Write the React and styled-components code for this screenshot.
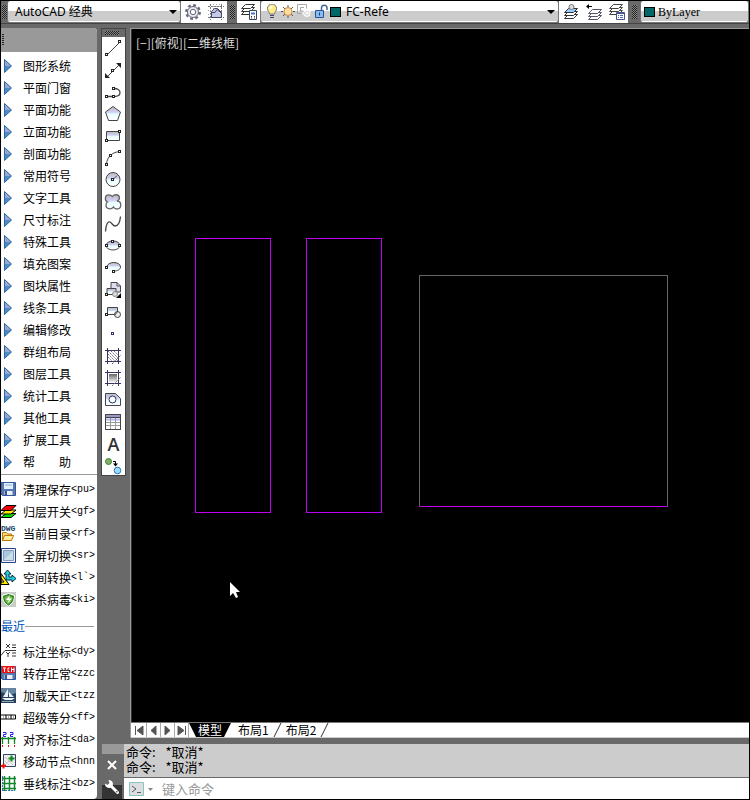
import React from "react";
import styled, { createGlobalStyle } from "styled-components";

const GlobalStyle = createGlobalStyle`
  * { box-sizing: border-box; }
  body { margin: 0; background: #000; }
  button, input, select { font: inherit; color: inherit; margin: 0; }
`;

const cjk = `"Noto Sans CJK SC", sans-serif`;

const Frame = styled.div`
  display: flex;
  flex-direction: column;
  min-height: 100vh;
  padding: 1px;
  background: #000;
  color: #000;
  font: 12px/22px ${cjk};
`;

/* ---------- top bar ---------- */

const TopBar = styled.header`
  display: flex;
  height: 23px;
  flex: none;
  background: #696969;
  border-bottom: 1px solid #444;
`;

const Grip = styled.span`
  flex: none;
  width: ${(p) => p.$w}px;
  display: flex;
  align-items: center;
  justify-content: center;
  &::before {
    content: "";
    width: 5px;
    height: 14px;
    background: repeating-conic-gradient(#222 0 25%, #888 0 50%) 0 0 / 2px 2px;
  }
`;

const Combo = styled.div`
  position: relative;
  display: flex;
  align-items: center;
  height: 22px;
  flex: ${(p) => p.$flex || "none"};
  width: ${(p) => (p.$w ? p.$w + "px" : "auto")};
  min-width: 0;
  overflow: hidden;
  border: 1px solid #777;
  border-width: 0 1px 1px 1px;
  border-radius: 3px;
  background: linear-gradient(#fff 0 10px, #ccc 10px 20px, #fff 20px);
`;

const ComboSelect = styled.select`
  appearance: none;
  width: 100%;
  height: 21px;
  border: 0;
  outline: 0;
  background: transparent;
  padding: 0 16px 0 ${(p) => p.$pad}px;
  font: 12px/20px ${(p) => (p.$serif ? `"Liberation Serif", serif` : `"Noto Sans", ${cjk}`)};
`;

const ComboIcons = styled.span`
  position: absolute;
  left: 3px;
  top: 3px;
  display: flex;
  align-items: center;
  height: 16px;
  pointer-events: none;
`;

const ComboArrow = styled.span`
  position: absolute;
  right: 3px;
  top: 9px;
  border: 4px solid transparent;
  border-top: 4px solid #000;
  border-bottom: 0;
  pointer-events: none;
`;

const IconStrip = styled.div`
  display: flex;
  flex: none;
  height: 22px;
  background: #fff;
`;

const IconButton = styled.button`
  display: flex;
  align-items: center;
  justify-content: center;
  width: 23px;
  height: 22px;
  padding: 0;
  border: 0;
  background: transparent;
`;

/* ---------- menu panel ---------- */

const Body = styled.div`
  display: flex;
  flex: 1;
  padding-top: 4px;
  background: #696969;
`;

const Side = styled.aside`
  display: flex;
  flex-direction: column;
  flex: none;
  width: 96px;
  border-radius: 0 4px 4px 0;
  overflow: hidden;
  background: #fff;
`;

const SideHead = styled.div`
  height: 24px;
  padding: 6px 0 0 1px;
  background: #999;
  margin-bottom: 3px;
  &::before {
    content: "";
    display: block;
    width: 2px;
    height: 12px;
    background: repeating-linear-gradient(#222 0 1px, #999 1px 2px);
  }
`;

const MenuItem = styled.button`
  display: flex;
  align-items: center;
  width: 96px;
  height: 22px;
  padding: 0;
  border: 0;
  background: none;
  text-align: left;
  white-space: pre;
  svg { flex: none; }
`;

const MenuIcon = styled.span`
  display: flex;
  flex: none;
  width: 22px;
`;

const MenuLabel = styled.span`
  display: flex;
  justify-content: space-between;
  width: 48px;
  flex: none;
`;

const Shortcut = styled.span`
  font: 10px/22px "Liberation Mono", monospace;
`;

const Divider = styled.hr`
  width: 100%;
  height: 1px;
  margin: 1px 0 4px;
  border: 0;
  background: #999;
`;

const Recent = styled.h2`
  display: flex;
  align-items: center;
  margin: 4px 3px 4px 0;
  height: 22px;
  font: 12px/22px ${cjk};
  color: #0055bb;
  white-space: nowrap;
  &::after {
    content: "";
    flex: 1;
    height: 1px;
    background: #999;
  }
`;

/* ---------- work area ---------- */

const Work = styled.div`
  display: flex;
  flex: 1;
  flex-direction: column;
  min-width: 0;
`;

const WorkRow = styled.div`
  display: flex;
  flex: 1;
  align-items: stretch;
  padding-left: 4px;
`;

const Tools = styled.div`
  align-self: flex-start;
  flex: none;
  width: 25px;
  border: 1px solid #444;
  background: #fff;
`;

const ToolsGrip = styled.div`
  height: 8px;
  padding: 2px 3px 0;
  background: #696969;
  &::before {
    content: "";
    display: block;
    width: 14px;
    height: 4px;
    background: repeating-conic-gradient(#222 0 25%, #888 0 50%) 0 0 / 2px 2px;
  }
`;

const ToolButton = styled.button`
  display: flex;
  align-items: center;
  justify-content: center;
  width: 23px;
  height: 22px;
  padding: 0;
  border: 0;
  background: none;
  font: 600 18px/22px "Open Sans", sans-serif;
  color: #333;
  &:last-child {
    height: 20px;
    align-items: flex-start;
  }
`;

const Document = styled.main`
  display: flex;
  flex: 1;
  flex-direction: column;
  min-width: 0;
  margin-left: 4px;
  border-left: 1px solid #999;
  border-top: 1px solid #999;
`;

const Canvas = styled.section`
  position: relative;
  flex: 1;
  min-height: 400px;
  overflow: hidden;
  border-left: 1px solid #333;
  background: #000;
`;

const ViewLabel = styled.div`
  position: absolute;
  left: 4px;
  top: 3px;
  color: #ddd;
`;

const Drawing = styled.svg`
  display: block;
`;

const TabRow = styled.nav`
  display: flex;
  flex: none;
  height: 16px;
  padding-left: 2px;
  background: #fff;
  border-top: 1px solid #777;
  border-bottom: 1px solid #ccc;
`;

const PageButton = styled.button`
  display: flex;
  align-items: center;
  justify-content: center;
  width: 14px;
  height: 14px;
  padding: 0;
  border: 0;
  border-right: 1px solid #aaa;
  background: #fff;
`;

const Tab = styled.button`
  display: flex;
  align-items: center;
  height: 14px;
  padding: 0 ${(p) => (p.$active ? 9 : 4)}px;
  margin-right: ${(p) => (p.$active ? 3 : 0)}px;
  border: 0;
  background: ${(p) => (p.$active ? "#000" : "#fff")};
  color: ${(p) => (p.$active ? "#fff" : "#000")};
  clip-path: ${(p) => (p.$active ? "polygon(0 0, 100% 0, calc(100% - 7px) 100%, 7px 100%)" : "none")};
  font: 12px/14px ${cjk};
`;

/* ---------- command line ---------- */

const Command = styled.section`
  display: flex;
  flex: none;
  height: 55px;
  margin: 6px 0 0 5px;
`;

const CommandSide = styled.div`
  display: flex;
  flex-direction: column;
  width: 22px;
  flex: none;
  border-top: 10px solid #999;
`;

const SideTool = styled.button`
  display: flex;
  align-items: center;
  justify-content: center;
  width: 20px;
  height: ${(p) => (p.$dark ? 24 : 21)}px;
  padding: 0;
  border: 0;
  background: ${(p) => (p.$dark ? "linear-gradient(#696969 0 10px, #333 10px)" : "#696969")};
`;

const CommandMain = styled.div`
  flex: 1;
  min-width: 0;
  background: #fff;
`;

const History = styled.div`
  height: 34px;
  padding: 0 2px;
  border-bottom: 1px solid #696969;
  background: #ccc;
  font: 13px/15px ${cjk};
`;

const HistoryLine = styled.div`
  white-space: nowrap;
  span { margin-left: 7px; }
`;

const Prompt = styled.label`
  display: flex;
  align-items: center;
  height: 21px;
  padding-left: 5px;
`;

const PromptInput = styled.input`
  flex: 1;
  min-width: 0;
  height: 20px;
  margin-left: 8px;
  padding: 0;
  border: 0;
  outline: 0;
  background: none;
  font: 13px/20px ${cjk};
  &::placeholder { color: #999; opacity: 1; }
`;

/* ---------- icons ---------- */

const Svg16 = ({ children }) => (
  <svg width="16" height="16" viewBox="0 0 16 16" fill="none" stroke="#333" aria-hidden="true">
    {children}
  </svg>
);

const Sheets = ({ x = 0, y = 0, s = "#333", fill = "#fff" }) => (
  <g transform={`translate(${x} ${y})`} stroke={s} fill="#fff">
    <path d="M4.500 8.500h9l-4 4h-9z" />
    <path d="M4.500 5.500h9l-4 4h-9z" />
    <path d="M4.500 2.500h9l-4 4h-9z" fill={fill} />
  </g>
);

const Gear = () => (
  <Svg16>
    <circle cx="8" cy="8" r="6.800" stroke="#667" strokeWidth="2.200" strokeDasharray="2.840 2.500" />
    <circle cx="8" cy="8" r="5.500" fill="#e6e8f0" stroke="#667" />
    <circle cx="8" cy="8" r="2.700" fill="#fff" stroke="#667" />
  </Svg16>
);

const Workspace = () => (
  <Svg16>
    <path d="M2.500 0v16M0 2.500h16M13.500 0v16M0 13.500h16" stroke="#777" strokeDasharray="2 1" />
    <path d="M5.500 0v5M8.500 0v3M11.500 0v4M0 6.500h3M0 10.500h3" stroke="#aaa" strokeDasharray="1 1" />
    <path d="M3.500 7.500l3-3h3l4 4v5h-10z" fill="#c5c9e6" stroke="#444466" />
    <path d="M3 8.500h4l2-3 5 4" stroke="#444466" />
  </Svg16>
);

const LayerProps = () => (
  <Svg16>
    <Sheets y={-2} />
    <path d="M8.500 6.500h7v9h-7z" fill="#fff" stroke="#334466" />
    <path d="M10 9.500h4" stroke="#4477cc" strokeWidth="2" />
    <path d="M10 12.500h1m2 0h1M10 14h1m2 0h1" stroke="#333" />
  </Svg16>
);

const Bulb = () => (
  <Svg16>
    <path d="M5.500 10c0-2-2-3-2-5.500a4.500 4.500 0 0 1 9 0c0 2.500-2 3.500-2 5.500z" fill="#ffee88" stroke="#777" />
    <path d="M6 4.500l2-2" stroke="#fff" strokeWidth="2" />
    <path d="M6 11.500h4M6 13.500h4" stroke="#446" />
  </Svg16>
);

const Sun = () => (
  <Svg16>
    <path d="M8 1v2M8 12v2M1 7.500h2M13 7.500h2M3 3l2 2M11 10l2 2M13 3l-2 2M3 12l2-2" stroke="#555" />
    <circle cx="8" cy="7.500" r="4" fill="#ffe0a0" stroke="#cc8844" />
  </Svg16>
);

const ViewportFreeze = () => (
  <Svg16>
    <path d="M1.500.5h9v4M1.500.5v9h4" stroke="#aaa" />
    <path d="M8 3.500H4.500V7h3" stroke="#aaa" />
    <path d="M11 5v9M6.500 9.500h9M8 6.500l6 6M14 6.500l-6 6" stroke="#fff" strokeWidth="2" strokeDasharray="2 1" />
    <circle cx="11" cy="9.500" r="2" stroke="#ddd" />
  </Svg16>
);

const Unlock = () => (
  <Svg16>
    <path d="M9.500 7V4a2.700 2.700 0 0 1 5.500 0v2" stroke="#446699" strokeWidth="1.500" />
    <path d="M3.500 6.500h8v7h-8z" fill="#88bbee" stroke="#225599" />
    <path d="M7.500 8.500v3" stroke="#114488" />
  </Svg16>
);

const Swatch = styled.span`
  width: 11px;
  height: 10px;
  border: 1px solid #000;
  background: #006666;
  svg + & { margin-left: 2px; }
`;

const MakeCurrent = () => (
  <Svg16>
    <Sheets x={1} y={2} fill="#99ccff" />
    <circle cx="8.500" cy="3" r="2.500" fill="#ddd" stroke="#777" />
  </Svg16>
);

const LayerPrevious = () => (
  <Svg16>
    <Sheets x={2} y={3} s="#556" />
    <path d="M1 2.500h5" stroke="#000" />
    <path d="M0 2.500L3 0v5z" fill="#000" stroke="none" />
  </Svg16>
);

const LayerStates = () => (
  <Svg16>
    <Sheets x={0} y={-2} s="#444" />
    <path d="M7.500 8.500h8v7h-8z" fill="#fff" stroke="#445588" />
    <path d="M7.500 9.500h8" stroke="#445588" />
    <path d="M9 11.500h1m1 0h3M9 13.500h1m1 0h3" stroke="#5566aa" />
  </Svg16>
);

const Node = ({ x, y }) => (
  <rect x={x - 1.5} y={y - 1.5} width="2" height="2" fill="#fff" stroke="#222" shapeRendering="crispEdges" />
);

const Tool = ({ children }) => (
  <svg width="23" height="22" viewBox="0 0 23 22" fill="none" stroke="#444" aria-hidden="true">
    <defs>
      <linearGradient id="sheen" x1="0" y1="0" x2="0" y2="1">
        <stop offset="0" stopColor="#bbb" />
        <stop offset=".4" stopColor="#cfcff4" />
        <stop offset=".55" stopColor="#e8ffff" />
        <stop offset="1" stopColor="#fff" />
      </linearGradient>
      <linearGradient id="shade" x1="0" y1="0" x2="0" y2="1">
        <stop offset="0" stopColor="#666" />
        <stop offset="1" stopColor="#eee" />
      </linearGradient>
    </defs>
    {children}
  </svg>
);

const tools = [
  ["直线", <><path d="M5 18L18 5" /><Node x={5} y={18} /><Node x={18} y={5} /></>],
  ["构造线", <><path d="M5 18L18 5" /><path d="M3 19v-5l5 5zM19 4v5l-5-5z" fill="#222" stroke="none" /><Node x={11} y={12} /></>],
  ["多段线", <><path d="M5 15.500h7c8 0 8-8 0-8" strokeWidth="1.300" /><Node x={5} y={16} /><Node x={12} y={16} /><Node x={12} y={8} /></>],
  ["多边形", <path d="M11 3.500l7.500 5.500-3 8.500h-9L3.500 9z" fill="url(#sheen)" />],
  ["矩形", <><path d="M4.500 6.500h13v9h-13z" fill="url(#sheen)" /><Node x={5} y={16} /><Node x={18} y={7} /></>],
  ["圆弧", <><path d="M4.500 17.500C5 9 11 5 18 4.500" /><Node x={5} y={18} /><Node x={9} y={9} /><Node x={18} y={5} /></>],
  ["圆", <><circle cx="11" cy="10.500" r="7" fill="url(#sheen)" /><path d="M11 10.500l4-4" /><Node x={11} y={11} /></>],
  ["修订云线", <path d="M5.500 11C2 9 3 3.500 7 4c2 0 3 1 3.500 1.500C12 3 17 3 17.500 6.500c0 2-1 3-2.500 3.500 5 0 5 8 0 8-2 0-3-1-3.500-2C9 19 4 18 4 14.500c0-2 .5-3 1.500-3.500z" fill="url(#sheen)" stroke="#666" strokeWidth="1.300" />],
  ["样条曲线", <path d="M3.500 18.500C4 11 6 8 8 9c2 1 3 4 5 4 4 0 5-4 5.500-9.500" strokeWidth="1.300" />],
  ["椭圆", <><ellipse cx="11" cy="10.500" rx="7" ry="4.500" fill="url(#sheen)" /><Node x={5} y={11} /><Node x={11} y={7} /><Node x={18} y={11} /></>],
  ["椭圆弧", <><path d="M5 10c0-6 13.500-6 13.500 0 0 2.500-3 4-6.500 4" fill="url(#sheen)" /><Node x={5} y={11} /><Node x={12} y={15} /></>],
  ["插入块", <><path d="M9 9V3.500h6l3.500 3.500v6h-4M15 3.500V7h3.500" stroke="#445" fill="#dde" /><path d="M5 9.500h9v6H5z" fill="url(#sheen)" /><circle cx="13" cy="15" r="2.500" fill="#ddd" stroke="#888" /><path d="M19 14v5h-5z" fill="#000" stroke="none" /><Node x={5} y={16} /></>],
  ["创建块", <><path d="M5.500 6.500h10v7h-10z" fill="url(#sheen)" /><circle cx="15.500" cy="13.500" r="3" fill="#eee" /><path d="M13 14l3-4" /><Node x={5} y={14} /></>],
  ["点", <rect x="9.500" y="9.500" width="2" height="2" stroke="#333377" />],
  ["图案填充", <><path d="M6 6l10 10M6 9l7 7M6 12l4 4M9 6l7 7M12 6l4 4" stroke="#778" strokeDasharray="2 1" /><path d="M5.500 3v16M16.500 3v16M3 5.500h16M3 16.500h16" stroke="#333366" /><path d="M10 19l9-9" stroke="#555" strokeDasharray="2 1" /></>],
  ["渐变色", <><path d="M7 7h8v8H7z" fill="url(#shade)" stroke="none" /><path d="M5.500 3v16M16.500 3v16M3 5.500h16M3 16.500h16" stroke="#333366" /><path d="M10 19l9-9" stroke="#777" strokeDasharray="2 1" /></>],
  ["面域", <><path d="M3.500 4.500h10l5 5v7h-15z" fill="url(#sheen)" stroke="#445" /><circle cx="10.500" cy="10.500" r="3.500" fill="#fff" stroke="#333366" /></>],
  ["表格", <><path d="M3.500 3.500h15v15h-15z" fill="#fff" /><path d="M4 5h14" stroke="#9999cc" strokeWidth="2" /><path d="M4 8.500h14" stroke="#b5b5ee" strokeWidth="2" /><path d="M4 11.500h14M4 14.500h14M8.500 7v11M13.500 7v11" stroke="#999" /><path d="M3.500 3.500h15v15h-15zM4 6.500h14" /></>],
  ["多行文字", null],
  ["添加选定对象", <><circle cx="6.500" cy="6.500" r="3" fill="#88aa66" stroke="#338833" /><circle cx="15.500" cy="15.500" r="3.300" fill="#99ddff" stroke="#3377bb" /><path d="M11 6.500h2.500V9" stroke="#000" /><path d="M11 8.500h5l-2.500 3z" fill="#000" stroke="none" /></>],
];

const Triangle = () => (
  <svg width="12" height="16" viewBox="0 0 12 16" aria-hidden="true">
    <path d="M3.500 1.500v13L10.500 8z" fill="#4c8ac8" />
    <path d="M4 2v6h6z" fill="#9aa6d6" />
    <path d="M3.500 1.500L10.500 8l-7 6.500z" fill="none" stroke="#2e6799" />
  </svg>
);

const Floppy = ({ tch }) => (
  <Svg16>
    <path d="M0 .5h14.500v13H1.500L0 12z" fill="#5878b0" stroke="#335599" />
    {tch ? (
      <>
        <path d="M1 0h13v7H1z" fill="#ee1111" stroke="none" />
        <path d="M2 2h3M3.500 2v4M8.500 2H7v3.500h1.500M10.500 1.500V6M13 1.500V6M10.500 3.500H13" stroke="#fff" />
      </>
    ) : (
      <>
        <path d="M3 1h9v6H3z" fill="#e2f0ff" stroke="none" />
        <path d="M4 3h7" stroke="#88aacc" />
      </>
    )}
    <path d="M3.500 9h8v4h-8z" fill="#eee" stroke="none" />
    <path d="M5 9v4" stroke="#335599" strokeWidth="2" />
  </Svg16>
);

const commands = [
  ["清理保存", "<pu>", <Floppy />],
  ["归层开关", "<gf>", <Svg16><g stroke="#000"><path d="M5 9.500h10l-5 4H0z" fill="#00dd00" /><path d="M5 6h10l-5 4H0z" fill="#ffee00" /><path d="M5 1.500h10l-5 5H0z" fill="#ee0000" /></g></Svg16>],
  ["当前目录", "<rf>", <svg width="16" height="20" viewBox="0 -2 16 20" fill="none" aria-hidden="true"><text x="0" y="5" fontSize="8" fontWeight="700" fontFamily="Liberation Mono, monospace" fill="#224466">DWG</text><path d="M1.500 14.500v-8h4l1 1.500h4v2" fill="#ffdd88" stroke="#bb7700" /><path d="M1.500 14.500l2-5h9l-2 5z" fill="#ffee99" stroke="#bb7700" /></svg>],
  ["全屏切换", "<sr>", <Svg16><path d="M.5.5h14v14H.5z" fill="#eef" stroke="#224488" /><path d="M2.500 2.500h10v10h-10z" fill="#aac8dd" stroke="#8899bb" /><path d="M3 12L12 3v9z" fill="#c8dfe8" stroke="none" /></Svg16>],
  ["空间转换", "<l`>", <Svg16><path d="M0 3.500v11h8zM0 8v4h3z" fill="#ffee00" stroke="#000" fillRule="evenodd" /><path d="M5 7V4H3l3.500-4L10 4H8v3h3V5l4 3.500-4 3.500v-2H5z" fill="#22ccdd" stroke="#003344" /></Svg16>],
  ["查杀病毒", "<ki>", <Svg16><path d="M0 0h15v15H0z" fill="#c8ccc8" stroke="none" /><path d="M7.500 1.500l6 2c0 5-2 8-6 10.500-4-2.500-6-5.500-6-10.500z" fill="#33881f" stroke="#fff" /><path d="M7.500 3.500l4 1.500c0 3-1.500 5-4 7-2.500-2-4-4-4-7z" fill="#7cbc55" stroke="none" /><path d="M9 3L5 8h3l-2 4 5-5.500H8z" fill="#fff" stroke="none" /></Svg16>],
];

const recent = [
  ["标注坐标", "<dy>", <Svg16><path d="M0 11.500l4-5h11M5 0l4 4M9 0L5 4M11 1h4M11 3.500h4M5 8l2 2 2-2M7 10v3M11 9h4M11 12h4" /></Svg16>],
  ["转存正常", "<zzc", <Floppy tch />],
  ["加载天正", "<tzz", <Svg16><path d="M0 0h15v15H0z" fill="#26405e" stroke="none" /><path d="M0 0h15v5L9 7 0 4z" fill="#6685a0" stroke="none" /><path d="M7 1v8H2zM8 4l5 5H8zM1 10h13l-3 2H4z" fill="#eef4f8" stroke="none" /><path d="M1 13.500h12" stroke="#8ab" /></Svg16>],
  ["超级等分", "<ff>", <Svg16><path d="M0 5h14.500v4H0M5 5v4M10 5v4" stroke="#000" /><path d="M2 7h1M7 7h1M12 7h1" stroke="#555" /></Svg16>],
  ["对齐标注", "<da>", <Svg16><path d="M2 .5h3v2H2.500v2H5M9 .5h3v2H9.500v2H12" stroke="#2222ee" /><path d="M0 6.500h15M1.500 5v7M7.500 5v7M13.500 5v7" stroke="#118822" strokeWidth="1.300" /><path d="M1.500 13v2M7.500 13v2M13.500 13v2" stroke="#ee1111" /></Svg16>],
  ["移动节点", "<hnn", <Svg16><path d="M2.500.5h12v12h-12z" fill="#eee" stroke="#334466" /><path d="M4 3l8 8M4 7l4 4M12 3l-8 8" stroke="#aaa" strokeDasharray="1 1" /><path d="M10.500 1.500v6M7.500 4.500h6" stroke="#118822" strokeWidth="2" /><path d="M2.500 9.500v5M0 12h5" stroke="#ee1111" strokeWidth="2" /></Svg16>],
  ["垂线标注", "<bz>", <Svg16><path d="M1 2.500h14M1 7.500h14M1 12.500h14M3.500 0v15M8.500 0v15M13.500 0v15" stroke="#11882f" strokeWidth="1.500" /><path d="M1.500 0v15M1 14.500h13" stroke="#3377aa" strokeDasharray="2 1" /></Svg16>],
];

const menus = ["图形系统", "平面门窗", "平面功能", "立面功能", "剖面功能", "常用符号", "文字工具", "尺寸标注", "特殊工具", "填充图案", "图块属性", "线条工具", "编辑修改", "群组布局", "图层工具", "统计工具", "其他工具", "扩展工具"];

const CommandItem = ({ item: [label, code, icon] }) => (
  <MenuItem>
    <MenuIcon>{icon}</MenuIcon>
    <MenuLabel>{label}</MenuLabel>
    <Shortcut>{code}</Shortcut>
  </MenuItem>
);

const pagers = [
  ["首页", "M2.500 2v9M10 2v9L4 6.500z"],
  ["上一页", "M9 2v9L4 6.500z"],
  ["下一页", "M4 2v9l5-4.500z"],
  ["末页", "M10.500 2v9M3 2v9l6-4.500z"],
];

const Slash = () => (
  <svg width="9" height="14" viewBox="0 0 9 14" aria-hidden="true">
    <path d="M1 14L8 0" stroke="#333" fill="none" />
  </svg>
);

export default function App() {
  return (
    <Frame>
      <GlobalStyle />
      <TopBar>
        <Grip $w={6} />
        <Combo $w={174}>
          <ComboSelect $pad={7} aria-label="工作空间"><option>AutoCAD 经典</option></ComboSelect>
          <ComboArrow />
        </Combo>
        <IconStrip>
          <IconButton aria-label="工作空间设置"><Gear /></IconButton>
          <IconButton aria-label="我的工作空间"><Workspace /></IconButton>
        </IconStrip>
        <Grip $w={10} />
        <IconStrip><IconButton aria-label="图层特性"><LayerProps /></IconButton></IconStrip>
        <Combo $w={299}>
          <ComboIcons><Bulb /><Sun /><ViewportFreeze /><Unlock /><Swatch /></ComboIcons>
          <ComboSelect $pad={85} aria-label="图层"><option>FC-Refe</option></ComboSelect>
          <ComboArrow />
        </Combo>
        <IconStrip>
          <IconButton aria-label="置为当前"><MakeCurrent /></IconButton>
          <IconButton aria-label="上一个图层"><LayerPrevious /></IconButton>
          <IconButton aria-label="图层状态"><LayerStates /></IconButton>
        </IconStrip>
        <Grip $w={12} />
        <Combo $flex="1">
          <ComboIcons><Swatch /></ComboIcons>
          <ComboSelect $pad={17} $serif aria-label="颜色"><option>ByLayer</option></ComboSelect>
        </Combo>
      </TopBar>

      <Body>
        <Side>
          <SideHead />
          {menus.map((m) => (
            <MenuItem key={m}><MenuIcon><Triangle /></MenuIcon><MenuLabel>{m}</MenuLabel></MenuItem>
          ))}
          <MenuItem>
            <MenuIcon><Triangle /></MenuIcon>
            <MenuLabel><span>帮</span><span>助</span></MenuLabel>
          </MenuItem>
          <Divider />
          {commands.map((c) => <CommandItem key={c[0]} item={c} />)}
          <Recent>最近</Recent>
          {recent.map((c) => <CommandItem key={c[0]} item={c} />)}
        </Side>

        <Work>
          <WorkRow>
            <Tools>
              <ToolsGrip />
              {tools.map(([name, art]) => (
                <ToolButton key={name} aria-label={name}>{art ? <Tool>{art}</Tool> : "A"}</ToolButton>
              ))}
            </Tools>
            <Document>
              <Canvas>
                <Drawing width="617" height="600" viewBox="132 29 617 600" fill="none" shapeRendering="crispEdges">
                  <path d="M195.500 238.500h75v274h-75zM306.500 238.500h75v274h-75z" stroke="#c000f0" />
                  <path d="M419.500 506.500v-231h248v231" stroke="#666" />
                  <path d="M419 506.500h249" stroke="#c000f0" />
                  <path d="M230 582v14l3-3 3 5 2-1-2-5h4z" fill="#fff" shapeRendering="auto" />
                </Drawing>
                <ViewLabel>[−][俯视][二维线框]</ViewLabel>
              </Canvas>
              <TabRow>
                {pagers.map(([name, d]) => (
                  <PageButton key={name} aria-label={name}>
                    <svg width="13" height="13" viewBox="0 0 13 13" aria-hidden="true">
                      <path d={d} fill="#555" stroke="#555" />
                    </svg>
                  </PageButton>
                ))}
                <Tab $active>模型</Tab>
                <Tab>布局1</Tab>
                <Slash />
                <Tab>布局2</Tab>
                <Slash />
              </TabRow>
            </Document>
          </WorkRow>
          <Command>
            <CommandSide>
              <SideTool aria-label="关闭">
                <svg width="12" height="12" viewBox="0 0 12 12" aria-hidden="true">
                  <path d="M2 2l8 8M10 2l-8 8" stroke="#fff" strokeWidth="2" />
                </svg>
              </SideTool>
              <SideTool $dark aria-label="自定义">
                <svg width="16" height="16" viewBox="0 0 16 16" aria-hidden="true">
                  <path d="M6 6l7.500 7.500" stroke="#fff" strokeWidth="3" strokeLinecap="round" />
                  <path d="M4.500 1A4 4 0 1 1 1 4.500l2.500 1.500 2-2z" fill="#fff" />
                  <circle cx="12.800" cy="12.800" r=".8" fill="#333" />
                </svg>
              </SideTool>
            </CommandSide>
            <CommandMain>
              <History>
                <HistoryLine>命令: <span>*取消*</span></HistoryLine>
                <HistoryLine>命令: <span>*取消*</span></HistoryLine>
              </History>
              <Prompt>
                <svg width="25" height="14" viewBox="0 0 25 14" aria-hidden="true">
                  <path d="M.5.5h14v13H.5z" fill="#ddd" stroke="#88c4c4" />
                  <path d="M3 4l4 3-4 3M8 10.500h4" fill="none" stroke="#555577" />
                  <path d="M19 6h5l-2.500 3z" fill="#888" />
                </svg>
                <PromptInput placeholder="键入命令" aria-label="命令行" />
              </Prompt>
            </CommandMain>
          </Command>
        </Work>
      </Body>
    </Frame>
  );
}
